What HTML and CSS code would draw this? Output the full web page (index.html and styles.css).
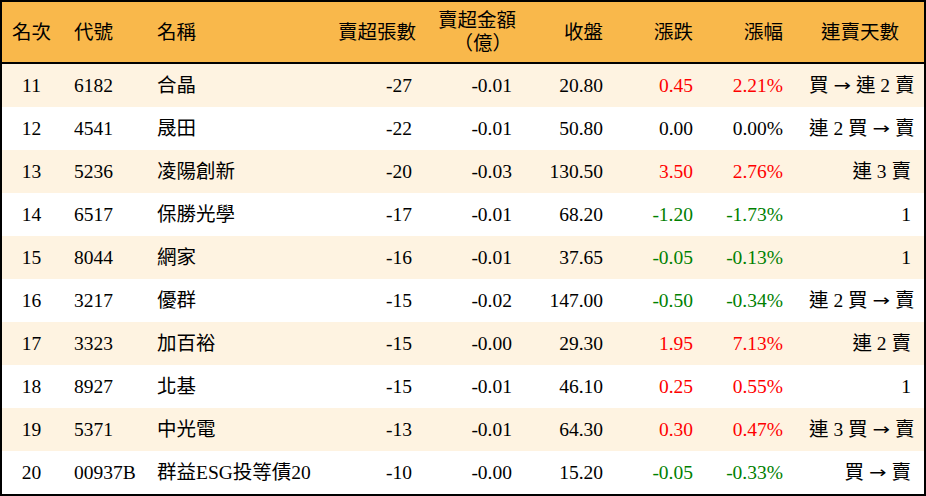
FILE: index.html
```html
<!DOCTYPE html>
<html lang="zh-Hant">
<head>
<meta charset="utf-8">
<title>賣超排行</title>
<link rel="stylesheet" href="styles.css">
</head>
<body>
<table class="rank">
  <colgroup>
    <col class="c-rank"><col class="c-code"><col class="c-name"><col class="c-vol"><col class="c-amt"><col class="c-close"><col class="c-chg"><col class="c-pct"><col class="c-days">
  </colgroup>
  <thead>
    <tr>
      <th class="center">名次</th>
      <th class="left">代號</th>
      <th class="left">名稱</th>
      <th>賣超張數</th>
      <th>賣超金額<br>（億）</th>
      <th>收盤</th>
      <th>漲跌</th>
      <th>漲幅</th>
      <th class="center">連賣天數</th>
    </tr>
  </thead>
  <tbody>
    <tr class="alt"><td class="center">11</td><td class="left">6182</td><td class="left">合晶</td><td>-27</td><td>-0.01</td><td>20.80</td><td class="up">0.45</td><td class="up">2.21%</td><td>買 <span class="arrow">→</span> 連 2 賣</td></tr>
    <tr><td class="center">12</td><td class="left">4541</td><td class="left">晟田</td><td>-22</td><td>-0.01</td><td>50.80</td><td>0.00</td><td>0.00%</td><td>連 2 買 <span class="arrow">→</span> 賣</td></tr>
    <tr class="alt"><td class="center">13</td><td class="left">5236</td><td class="left">凌陽創新</td><td>-20</td><td>-0.03</td><td>130.50</td><td class="up">3.50</td><td class="up">2.76%</td><td>連 3 賣</td></tr>
    <tr><td class="center">14</td><td class="left">6517</td><td class="left">保勝光學</td><td>-17</td><td>-0.01</td><td>68.20</td><td class="down">-1.20</td><td class="down">-1.73%</td><td>1</td></tr>
    <tr class="alt"><td class="center">15</td><td class="left">8044</td><td class="left">網家</td><td>-16</td><td>-0.01</td><td>37.65</td><td class="down">-0.05</td><td class="down">-0.13%</td><td>1</td></tr>
    <tr><td class="center">16</td><td class="left">3217</td><td class="left">優群</td><td>-15</td><td>-0.02</td><td>147.00</td><td class="down">-0.50</td><td class="down">-0.34%</td><td>連 2 買 <span class="arrow">→</span> 賣</td></tr>
    <tr class="alt"><td class="center">17</td><td class="left">3323</td><td class="left">加百裕</td><td>-15</td><td>-0.00</td><td>29.30</td><td class="up">1.95</td><td class="up">7.13%</td><td>連 2 賣</td></tr>
    <tr><td class="center">18</td><td class="left">8927</td><td class="left">北基</td><td>-15</td><td>-0.01</td><td>46.10</td><td class="up">0.25</td><td class="up">0.55%</td><td>1</td></tr>
    <tr class="alt"><td class="center">19</td><td class="left">5371</td><td class="left">中光電</td><td>-13</td><td>-0.01</td><td>64.30</td><td class="up">0.30</td><td class="up">0.47%</td><td>連 3 買 <span class="arrow">→</span> 賣</td></tr>
    <tr><td class="center">20</td><td class="left">00937B</td><td class="left">群益ESG投等債20</td><td>-10</td><td>-0.00</td><td>15.20</td><td class="down">-0.05</td><td class="down">-0.33%</td><td>買 <span class="arrow">→</span> 賣</td></tr>
  </tbody>
</table>
</body>
</html>
```

FILE: styles.css
```css
html, body {
  margin: 0;
  padding: 0;
  background: #ffffff;
}

.rank {
  box-sizing: border-box;
  width: 926px;
  table-layout: fixed;
  border-collapse: separate;
  border-spacing: 0;
  border: 2px solid #000000;
  font-family: "Liberation Serif", "Noto Sans CJK TC", serif;
  font-size: 19.5px;
  color: #000000;
}

.c-rank { width: 59px; }
.c-code { width: 83px; }
.c-name { width: 181px; }
.c-vol { width: 100px; }
.c-amt { width: 100px; }
.c-close { width: 91px; }
.c-chg { width: 90px; }
.c-pct { width: 90px; }
.c-days { width: 128px; }

.rank th {
  height: 60px;
  padding: 0 13px;
  background: #f9b84b;
  border-bottom: 2px solid #000000;
  font-weight: normal;
  line-height: 23px;
  text-align: right;
  vertical-align: middle;
  white-space: nowrap;
}

.rank td {
  height: 43px;
  padding: 0 13px;
  line-height: 24px;
  text-align: right;
  vertical-align: middle;
  white-space: nowrap;
}

.rank tr.alt td {
  background: #fef3e1;
}

.rank .left { text-align: left; }
.rank .center { text-align: center; padding: 0; }

.rank .up { color: #ff0000; }
.rank .down { color: #008000; }

.arrow {
  display: inline-block;
  font-family: "DejaVu Sans", sans-serif;
  font-size: 21px;
  line-height: 24px;
  transform: scaleY(0.8);
}
```
